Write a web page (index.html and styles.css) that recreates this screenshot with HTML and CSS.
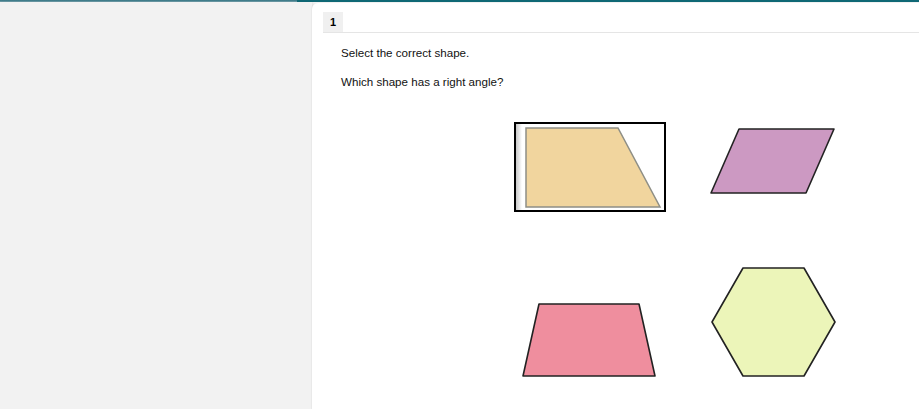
FILE: index.html
```html
<!DOCTYPE html>
<html lang="en">
<head>
<meta charset="utf-8">
<title>Question 1</title>
<link rel="stylesheet" href="styles.css">
</head>
<body>
<div class="topbar"><div class="topbar-left"></div></div>
<div class="app">
  <aside class="sidebar"></aside>
  <main class="main">
    <div class="tabs"><div class="tab">1</div></div>
    <div class="content">
      <p class="prompt">Select the correct shape.</p>
      <p class="prompt">Which shape has a right angle?</p>
      <div class="choices">
        <div class="cell cell-1">
          <div class="choice selected">
            <svg width="148" height="86" viewBox="0 0 148 86">
              <defs>
                <linearGradient id="edge" x1="0" x2="1" y1="0" y2="0">
                  <stop offset="0" stop-color="#c8c8c8"/>
                  <stop offset="1" stop-color="#ffffff"/>
                </linearGradient>
              </defs>
              <rect x="0" y="0" width="6" height="86" fill="url(#edge)"/>
              <polygon points="10,4 102,4 144,83 10,83" fill="#f1d59e" stroke="#8f8f86" stroke-width="1.5"/>
            </svg>
          </div>
        </div>
        <div class="cell cell-2">
          <svg width="140" height="100" viewBox="0 0 140 100">
            <polygon points="39,11 134,11 106,75 11,75" fill="#cc99c2" stroke="#222" stroke-width="1.6" stroke-linejoin="round"/>
          </svg>
        </div>
        <div class="cell cell-3">
          <svg width="190" height="120" viewBox="0 0 190 120">
            <polygon points="29,42 129,42 145,114 13,114" fill="#ef8e9e" stroke="#222" stroke-width="1.6" stroke-linejoin="round"/>
          </svg>
        </div>
        <div class="cell cell-4">
          <svg width="140" height="120" viewBox="0 0 140 120">
            <polygon points="43,6 104,6 135,60 104,114 43,114 12,60" fill="#ecf5b9" stroke="#222" stroke-width="1.6" stroke-linejoin="round"/>
          </svg>
        </div>
      </div>
    </div>
  </main>
</div>
</body>
</html>
```
FILE: styles.css
```css
html, body {
  margin: 0;
  padding: 0;
}
body {
  width: 919px;
  height: 409px;
  overflow: hidden;
  background: #f2f2f2;
  font-family: "Liberation Sans", Arial, sans-serif;
  color: #111;
}
.topbar {
  height: 2px;
  background: #0f6875;
  display: flex;
}
.topbar-left {
  width: 297px;
  height: 2px;
  background: linear-gradient(to bottom, #2f7180 0, #7aa3ad 100%);
}
.app {
  display: flex;
  height: 407px;
}
.sidebar {
  width: 312px;
  flex: 0 0 312px;
  background: #f2f2f2;
  box-shadow: 1px 0 2px rgba(0, 0, 0, 0.06);
}
.main {
  flex: 1;
  margin-top: 1px;
  background: #fff;
  border-top-left-radius: 6px;
  padding: 9px 0 0 11px;
  box-shadow: -1px 0 1px rgba(0, 0, 0, 0.04);
}
.tabs {
  display: flex;
  border-bottom: 1px solid #e5e5e5;
}
.tab {
  width: 20px;
  height: 20px;
  background: #f0f0f0;
  font-weight: bold;
  font-size: 11px;
  line-height: 20px;
  text-align: center;
  color: #000;
}
.content {
  padding: 13px 0 0 18px;
}
.prompt {
  margin: 0 0 16px;
  font-size: 11.6px;
  line-height: 13px;
  color: #111;
}
.choices {
  display: grid;
  grid-template-columns: 190px 140px;
  grid-template-rows: 100px 120px;
  row-gap: 44px;
  margin: 30px 0 0 169px;
}
.cell svg {
  display: block;
}
.choice.selected {
  margin: 4px 0 0 4px;
  width: 148px;
  height: 86px;
  border: 2px solid #000;
  background: #fff;
}
```
